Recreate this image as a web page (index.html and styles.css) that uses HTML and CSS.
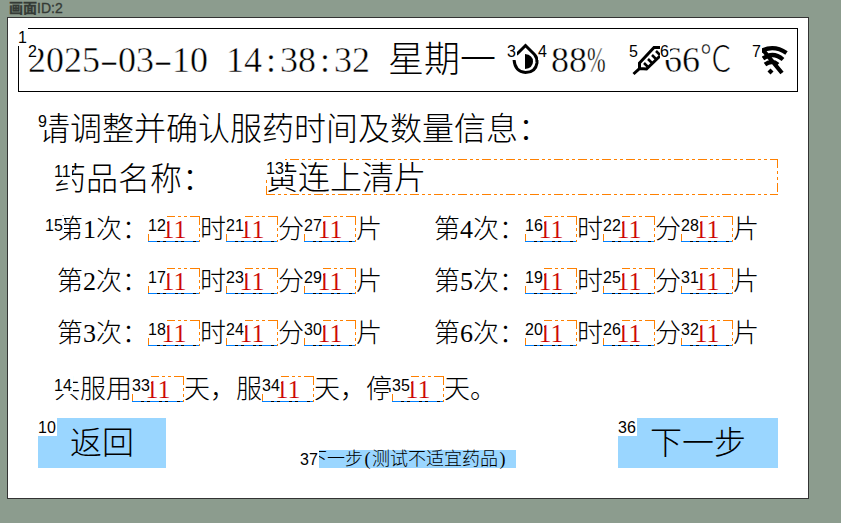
FILE: index.html
```html
<!DOCTYPE html>
<html lang="zh-CN">
<head>
<meta charset="utf-8">
<title>画面ID:2</title>
<link rel="stylesheet" href="styles.css">
</head>
<body>
<div class="caption"><b>画面</b>ID:2</div>
<main class="screen">
  <header class="bar">
    <span class="tag">1</span>
    <div class="clock"><span class="tag">2</span><span class="num">2025<i class="dash">-</i>03<i class="dash">-</i>10 14<i>:</i>38<i>:</i>32</span> 星期一</div>
    <div class="icon drop"><span class="tag">3</span>
      <svg width="34" height="36" viewBox="0 0 34 36"><path d="M9.500 12.500 18.500 3.500 27.500 12.500M27.500 12.500Q30.500 16 30 21 28.500 30.500 18.500 30.500 8 30 7 17.500" fill="none" stroke="#000" stroke-width="3"/><path d="M18 12q8 1 8 7.500T18 27z"/></svg>
    </div>
    <div class="humidity"><span class="tag">4</span><span class="num">88<i class="pct">%</i></span></div>
    <div class="icon probe"><span class="tag">5</span>
      <svg width="34" height="36" viewBox="0 0 34 36"><path d="M4.500 32 10.500 26.500V21L25 5.500h8M10.500 26.500l7 .5L31 14" fill="none" stroke="#000" stroke-width="3"/><path d="m15 21 3.500 3.500M19 17l4 4M23 13l4 4M27 9l4 4" fill="none" stroke="#000" stroke-width="2.500"/></svg>
    </div>
    <div class="temp"><span class="tag">6</span><span class="num">66</span><span class="deg">℃</span></div>
    <div class="icon wifi"><span class="tag">7</span>
      <svg width="36" height="36" viewBox="0 0 36 36"><path d="M9 9Q22 2.500 34.500 11M11 16.500q10-7.500 20 1M13 22.500q7-5 13 0M11 8l19 23" fill="none" stroke="#000" stroke-width="4.200"/><path d="m18.500 26.500 3 3-3 3-3-3z"/></svg>
    </div>
  </header>

  <h1 class="title"><span class="tag">9</span>请调整并确认服药时间及数量信息：</h1>

  <section class="drug">
    <div class="drug-label"><span class="tag">11</span>药品名称：</div>
    <div class="box drug-name"><span class="tag">13</span>黄连上清片</div>
  </section>

  <section class="doses">
    <div class="dose"><span class="tag lead">15</span><label>第1次：</label><span class="box"><span class="tag">12</span>11</span>时<span class="box"><span class="tag">21</span>11</span>分<span class="box"><span class="tag">27</span>11</span>片</div>
    <div class="dose"><label>第4次：</label><span class="box"><span class="tag">16</span>11</span>时<span class="box"><span class="tag">22</span>11</span>分<span class="box"><span class="tag">28</span>11</span>片</div>
    <div class="dose"><label>第2次：</label><span class="box"><span class="tag">17</span>11</span>时<span class="box"><span class="tag">23</span>11</span>分<span class="box"><span class="tag">29</span>11</span>片</div>
    <div class="dose"><label>第5次：</label><span class="box"><span class="tag">19</span>11</span>时<span class="box"><span class="tag">25</span>11</span>分<span class="box"><span class="tag">31</span>11</span>片</div>
    <div class="dose"><label>第3次：</label><span class="box"><span class="tag">18</span>11</span>时<span class="box"><span class="tag">24</span>11</span>分<span class="box"><span class="tag">30</span>11</span>片</div>
    <div class="dose"><label>第6次：</label><span class="box"><span class="tag">20</span>11</span>时<span class="box"><span class="tag">26</span>11</span>分<span class="box"><span class="tag">32</span>11</span>片</div>
  </section>

  <section class="dose course"><span class="tag">14</span>共服用<span class="box"><span class="tag">33</span>11</span>天，服<span class="box"><span class="tag">34</span>11</span>天，停<span class="box"><span class="tag">35</span>11</span>天。</section>

  <footer class="actions">
    <button class="btn back"><span class="tag">10</span>返回</button>
    <button class="btn test"><span class="tag">37</span>下一步<i>(</i>测试不适宜药品<i>)</i></button>
    <button class="btn next"><span class="tag">36</span>下一步</button>
  </footer>
</main>
</body>
</html>
```
FILE: styles.css
```css
* { box-sizing: border-box; }

body {
  margin: 0;
  width: 841px;
  height: 523px;
  overflow: hidden;
  background: #8c9c8e;
  color: #000;
  font-family: "Liberation Serif", "Noto Sans CJK SC", serif;
  font-weight: 300;
}

.caption {
  height: 17px;
  padding-left: 9px;
  font: 14px/17px "Liberation Sans", "Noto Sans CJK SC", sans-serif;
  color: #343a35;
  -webkit-text-stroke: 0.3px #343a35;
}

.screen {
  width: 802px;
  height: 482px;
  margin-left: 7px;
  padding: 10px;
  background: #fff;
  border: 1px solid #333;
}

i {
  display: inline-block;
  width: 0.5em;
  text-align: center;
  font-style: normal;
}

.num { -webkit-text-stroke: 0.45px #fff; }

.tag {
  position: absolute;
  left: 0;
  top: 0;
  z-index: 2;
  height: 18px;
  padding-right: 1px;
  background: #fff;
  color: #000;
  font: 16px/20px "Liberation Sans", sans-serif;
  -webkit-text-stroke: 0;
}

.bar {
  position: relative;
  display: flex;
  width: 780px;
  height: 64px;
  padding: 13px 0 0 9px;
  border: 1px solid #000;
  font-size: 36px;
  line-height: 37px;
  white-space: nowrap;
}
.bar > .tag { left: -1px; top: -1px; }
.bar > div { position: relative; height: 36px; }
.clock { width: 479px; word-spacing: 0.25em; }
.dash { transform: scaleX(1.6); }
.icon svg { display: block; }
.drop { width: 31px; }
.humidity { width: 91px; padding-left: 13px; }
.pct { transform: scaleX(0.62); transform-origin: left; }
.probe { width: 31px; }
.temp { width: 92px; padding-left: 4px; }
.deg {
  display: inline-block;
  transform: scaleX(0.88);
  transform-origin: left;
  -webkit-text-stroke: 0.3px #fff;
}

.title {
  position: relative;
  height: 32px;
  margin: 20px 0 0 20px;
  font-size: 32px;
  font-weight: 300;
  line-height: 34px;
}

.drug {
  display: flex;
  height: 36px;
  margin: 15px 0 0 36px;
  font-size: 32px;
}
.drug-label {
  position: relative;
  width: 212px;
  padding-top: 3px;
  line-height: 35px;
}
.drug-label .tag { top: 3px; }

.box {
  --dots: #ff8000 0 9px, transparent 9px 12px, #ff8000 12px 15px, transparent 15px 18px, #ff8000 18px 21px, transparent 21px 24px;
  position: relative;
  width: 52px;
  height: 26px;
  color: #c00;
  text-align: center;
  -webkit-text-stroke: 0.15px #fff;
  background:
    repeating-linear-gradient(to right, var(--dots)) -6px 0 / calc(100% + 6px) 1px no-repeat,
    repeating-linear-gradient(to bottom, var(--dots)) 100% 0 / 1px 100% no-repeat,
    repeating-linear-gradient(to right, #0080ff 0 9px, #000 9px 12px, #0080ff 12px 15px, #000 15px 18px) 0 100% / 100% 1px no-repeat,
    repeating-linear-gradient(to top, var(--dots)) 0 0 / 1px 100% no-repeat;
}
.box.drug-name {
  width: 512px;
  height: 36px;
  color: #000;
  text-align: left;
  line-height: 38px;
  -webkit-text-stroke: 0;
  background:
    repeating-linear-gradient(to right, var(--dots)) 0 0 / 100% 1px no-repeat,
    repeating-linear-gradient(to bottom, var(--dots)) 100% 0 / 1px 100% no-repeat,
    repeating-linear-gradient(to right, var(--dots)) 0 100% / 100% 1px no-repeat,
    repeating-linear-gradient(to top, var(--dots)) 0 0 / 1px 100% no-repeat;
}

.doses {
  display: grid;
  grid-template-columns: 377px 377px;
  row-gap: 26px;
  margin: 21px 0 0 39px;
}
.dose {
  position: relative;
  display: flex;
  height: 26px;
  font-size: 26px;
  line-height: 28px;
  white-space: nowrap;
}
.dose label { width: 91px; }
.tag.lead { left: -12px; }
.course { margin: 30px 0 0 36px; }

.actions {
  display: flex;
  align-items: flex-end;
  margin: 16px 0 0 20px;
}
.btn {
  position: relative;
  height: 50px;
  padding: 0;
  border: 0;
  background: #9ad6ff;
  color: #000;
  font-family: inherit;
  font-size: 32px;
  font-weight: 300;
  line-height: 51px;
}
.back { width: 128px; }
.test { width: 216px; height: 18px; margin: 0 102px 0 134px; font-size: 18px; line-height: 18px; white-space: nowrap; }
.next { width: 160px; }
```
